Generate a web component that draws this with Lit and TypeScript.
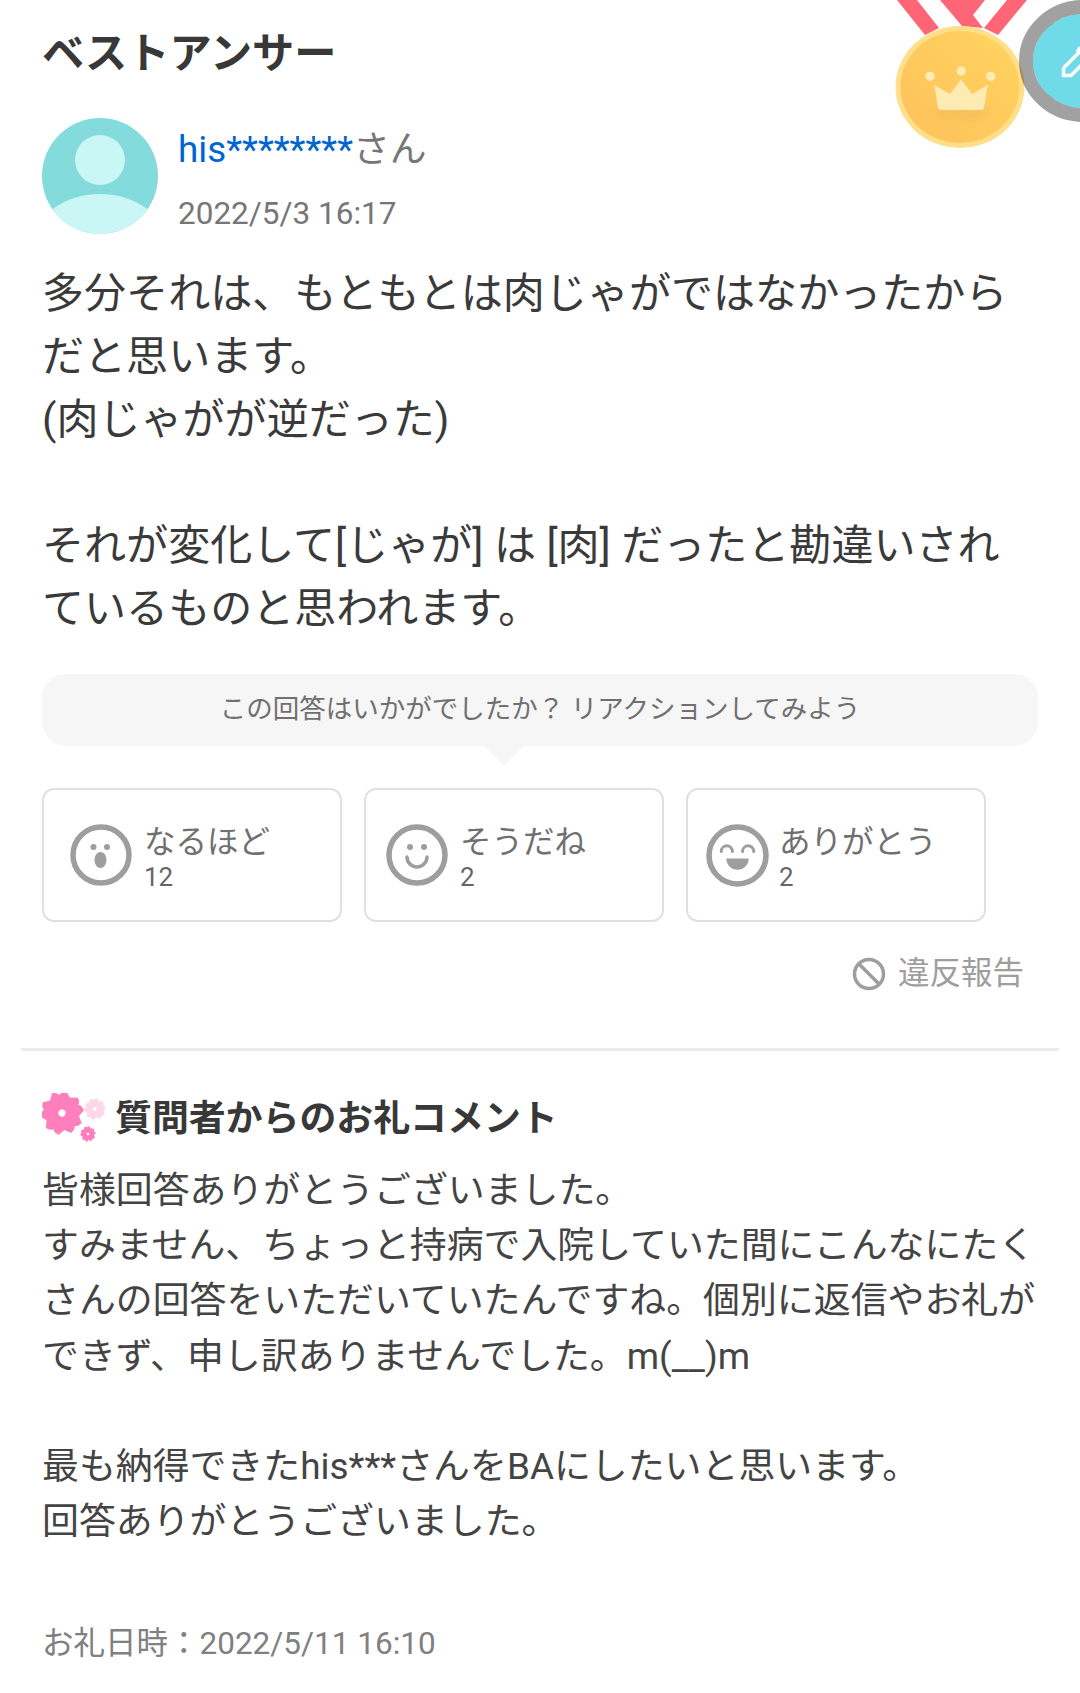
import { LitElement, html, css, svg } from "lit";
import { customElement } from "lit/decorators.js";

const face = (inner: unknown) => html`<svg class="face" viewBox="0 0 62 62"><circle cx="31" cy="31" r="28" fill="#fff" stroke="#9e9e9e" stroke-width="5.500"/>${inner}</svg>`;

const flower = (cx: number, cy: number, r: number, fill: string, rot: number) => {
  const d = `M0 ${-r * 0.1}C${-r * 0.62} ${-r * 0.42} ${-r * 0.62} ${-r * 0.85} ${-r * 0.3} ${-r}L0 ${-r * 0.82}L${r * 0.3} ${-r}C${r * 0.62} ${-r * 0.85} ${r * 0.62} ${-r * 0.42} 0 ${-r * 0.1}Z`;
  const pts = [0, 72, 144, 216, 288].map((a) => svg`<path d="${d}" transform="rotate(${a})" fill="${fill}"/>`);
  return svg`<g transform="translate(${cx} ${cy}) rotate(${rot})">${pts}<circle r="${r * 0.42}" fill="${fill}"/><circle r="${r * 0.17}" fill="#fff"/></g>`;
};

@customElement("app-root")
export class AppRoot extends LitElement {
  static styles = css`
    :host { display: block; position: relative; width: 1080px; height: 1693px; overflow: hidden; background: #fff; font-family: Roboto, "Noto Sans CJK JP", sans-serif; color: #333; }
    .decor { position: absolute; right: 0; top: 0; }
    .pad { padding: 0 21px; }
    .inner { padding: 0 21px; }
    h2 { margin: 0; padding-top: 24px; font-size: 42.2px; line-height: 60px; font-weight: 700; color: #383838; }
    .user { display: flex; gap: 20px; margin-top: 34px; height: 116px; }
    .avatar { width: 116px; height: 116px; flex: none; }
    .meta { display: flex; flex-direction: column; }
    .name { font-size: 36.8px; line-height: 60px; margin-top: 2px; color: #767676; }
    .name b { font-weight: 400; color: #0065d0; }
    .date { font-size: 31.5px; line-height: 44px; margin-top: 12px; color: #767676; }
    .body { margin: 28px 0 0; font-size: 42.05px; line-height: 63px; white-space: pre-line; color: #3a3a3a; }
    .ask { position: relative; box-sizing: border-box; margin-top: 34px; height: 72px; padding-bottom: 7px; background: #f6f6f6; border-radius: 24px; display: flex; align-items: center; justify-content: center; font-size: 26.5px; color: #707070; }
    .ask::after { content: ""; position: absolute; left: 442px; top: 72px; border: 20px solid transparent; border-top-color: #f6f6f6; border-bottom: 0; }
    .reactions { display: flex; gap: 22px; margin-top: 42px; }
    .btn { box-sizing: border-box; width: 300px; height: 134px; border: 2.5px solid #e0e0e0; border-radius: 12px; display: flex; align-items: center; gap: 12px; padding-left: 26px; }
    .btn.b2 { padding-left: 20px; gap: 12px; }
    .btn.b3 { padding-left: 18px; gap: 10px; }
    .btn.b3 .face { width: 63px; height: 63px; }
    .face { width: 62px; height: 62px; flex: none; }
    .txt { padding-top: 5px; }
    .lab { font-size: 31.5px; line-height: 40px; color: #707070; }
    .cnt { font-size: 26px; line-height: 29px; color: #666; }
    .report { display: flex; justify-content: flex-end; align-items: center; gap: 12px; margin-top: 29px; padding-right: 14px; font-size: 31.5px; line-height: 46px; color: #9e9e9e; }
    .report svg { width: 34px; height: 34px; flex: none; }
    hr { margin: 51px 0 0; border: 0; height: 3px; background: #ececec; }
    .thanks { display: flex; align-items: center; gap: 10px; margin-top: 42px; font-size: 36.9px; line-height: 52px; font-weight: 700; color: #383838; }
    .sakura { width: 63px; height: 52px; flex: none; }
    .comment { margin: 18px 0 0; font-size: 36.9px; line-height: 55.2px; white-space: pre-line; color: #444; }
    .foot { margin-top: 73px; font-size: 31.5px; line-height: 44px; color: #808080; }
  `;

  render() {
    return html`
      <div class="pad"><div class="inner">
        <h2>ベストアンサー</h2>
        <div class="user">
          <svg class="avatar" viewBox="0 0 116 116">
            <clipPath id="av"><circle cx="58" cy="58" r="58"/></clipPath>
            <g clip-path="url(#av)">
              <rect width="116" height="116" fill="#84dbdb"/>
              <circle cx="58" cy="42" r="25" fill="#caf6f6"/>
              <ellipse cx="58" cy="124" rx="65" ry="48" fill="#caf6f6"/>
            </g>
          </svg>
          <div class="meta">
            <div class="name"><b>his********</b>さん</div>
            <div class="date">2022/5/3 16:17</div>
          </div>
        </div>
        <p class="body">多分それは、もともとは肉じゃがではなかったから
だと思います。
(肉じゃがが逆だった)

それが変化して[じゃが] は [肉] だったと勘違いされ
ているものと思われます。</p>
        <div class="ask">この回答はいかがでしたか？ リアクションしてみよう</div>
        <div class="reactions">
          <div class="btn">
            ${face(svg`<circle cx="23.500" cy="23" r="3" fill="#9e9e9e"/><circle cx="37" cy="23" r="3" fill="#9e9e9e"/><ellipse cx="30.500" cy="36" rx="6" ry="8" fill="#9e9e9e"/>`)}
            <div class="txt"><div class="lab">なるほど</div><div class="cnt">12</div></div>
          </div>
          <div class="btn b2">
            ${face(svg`<circle cx="24" cy="23" r="3" fill="#9e9e9e"/><circle cx="38" cy="23" r="3" fill="#9e9e9e"/><path d="M21 33a10 10 0 0 0 20 0" fill="none" stroke="#9e9e9e" stroke-width="3.500" stroke-linecap="round"/>`)}
            <div class="txt"><div class="lab">そうだね</div><div class="cnt">2</div></div>
          </div>
          <div class="btn b3">
            ${face(svg`<path d="M15 27a5.500 5.500 0 0 1 11 0M36 27a5.500 5.500 0 0 1 11 0" fill="none" stroke="#9e9e9e" stroke-width="3" stroke-linecap="round"/><path d="M20 34h22a11 11 0 0 1-22 0z" fill="#9e9e9e"/>`)}
            <div class="txt"><div class="lab">ありがとう</div><div class="cnt">2</div></div>
          </div>
        </div>
        <div class="report">
          <svg viewBox="0 0 34 34"><circle cx="17" cy="17" r="14.500" fill="none" stroke="#9e9e9e" stroke-width="3.500"/><path d="M7 7l20 20" stroke="#9e9e9e" stroke-width="3.500"/></svg>
          違反報告
        </div>
      </div>
      <hr />
      <div class="inner">
        <div class="thanks">
          <svg class="sakura" viewBox="0 0 63 52">
            ${flower(20, 20, 21, "#ff7fbd", 28)}
            ${flower(53, 16, 10.500, "#ffd7e8", 28)}
            ${flower(46, 41, 7.500, "#ff7fbd", 28)}
          </svg>
          質問者からのお礼コメント
        </div>
        <p class="comment">皆様回答ありがとうございました。
すみません、ちょっと持病で入院していた間にこんなにたく
さんの回答をいただいていたんですね。個別に返信やお礼が
できず、申し訳ありませんでした。m(__)m

最も納得できたhis***さんをBAにしたいと思います。
回答ありがとうございました。</p>
        <div class="foot">お礼日時：2022/5/11 16:10</div>
      </div></div>
      <svg class="decor" width="200" height="150" viewBox="880 0 200 150">
        <defs>
          <linearGradient id="gold" x1="0" y1="1" x2="1" y2="0"><stop offset="0" stop-color="#fdc15b"/><stop offset="1" stop-color="#ffd45f"/></linearGradient>
          <filter id="soft" x="-30%" y="-60%" width="160%" height="220%"><feGaussianBlur stdDeviation="5"/></filter>
        </defs>
        <path d="M897 0h20l22 28-14 7zM940 0h45l-12 15 10 13-21-2zM1007 0h20l-29 35-14-7z" fill="#ff6675"/>
        <ellipse cx="960" cy="87" rx="64.500" ry="61" fill="#ffdf8a"/>
        <ellipse cx="960" cy="87" rx="59.500" ry="56" fill="url(#gold)"/>
        <ellipse cx="961" cy="113" rx="28" ry="7" fill="#eeb552" opacity=".45" filter="url(#soft)"/>
        <circle cx="930" cy="76.300" r="4.700" fill="#feeab3"/><circle cx="961.300" cy="71" r="4.700" fill="#feeab3"/><circle cx="990.700" cy="76.300" r="4.700" fill="#feeab3"/>
        <path d="M934.300 85l15.700 9 11-14.700 11 14.700 15.700-9-3.700 23a3 3 0 0 1-3 2h-40a3 3 0 0 1-3-2z" fill="#feeab3"/>
        <ellipse cx="1083.500" cy="61" rx="50.500" ry="47" fill="#70dbe8"/>
        <ellipse cx="1083.500" cy="61" rx="57.500" ry="54" fill="none" stroke="#000" stroke-opacity=".37" stroke-width="14"/>
        <path d="M1063.500 68v7.500h7.500l11-11M1063.500 68l18-18" fill="none" stroke="#fff" stroke-width="3.500"/>
        <path d="M1077 52l3-5" fill="none" stroke="#fff" stroke-width="3"/>
      </svg>
    `;
  }
}
